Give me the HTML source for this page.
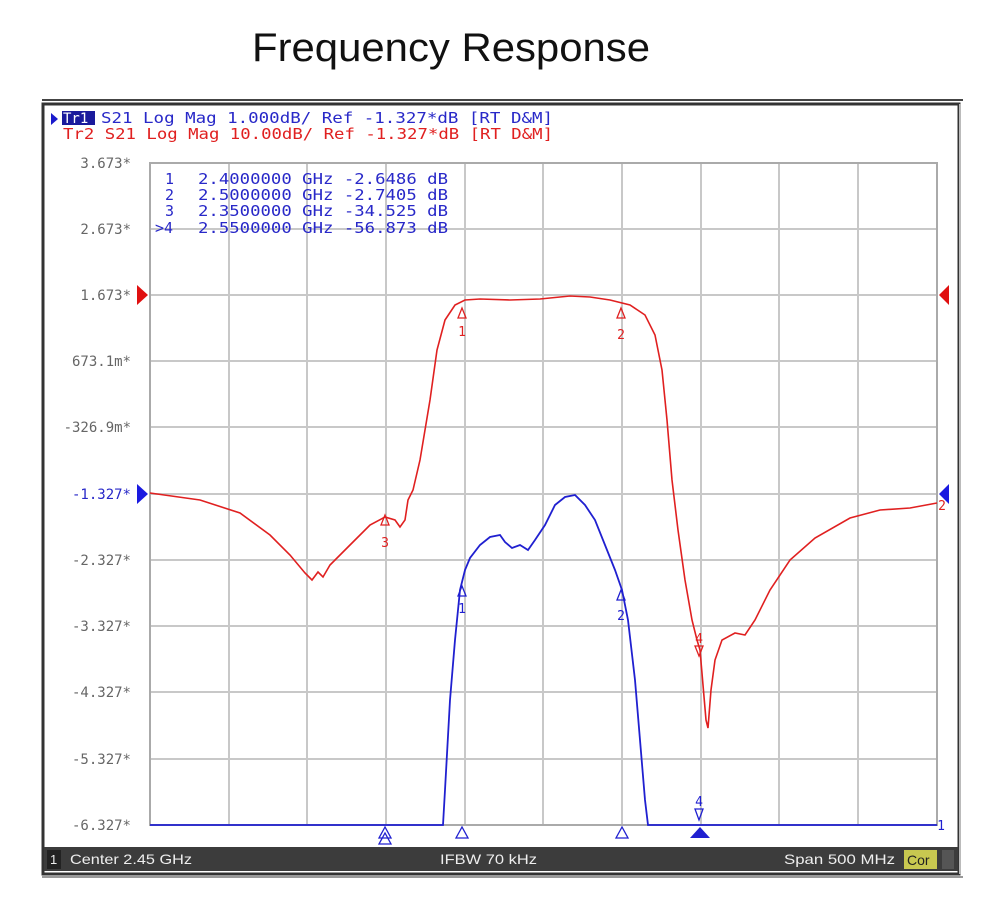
<!DOCTYPE html>
<html><head><meta charset="utf-8"><style>
body{margin:0;background:#fff;width:1000px;height:906px;overflow:hidden}
svg{display:block}
text{font-family:"DejaVu Sans Mono","Liberation Mono",monospace}
</style></head><body>
<svg width="1000" height="906" xmlns="http://www.w3.org/2000/svg">
<text x="252" y="61" textLength="398" lengthAdjust="spacingAndGlyphs" style="font-family:'Liberation Sans',sans-serif;font-size:40px" fill="#111">Frequency Response</text>
<!-- frame -->
<line x1="42" y1="100" x2="963" y2="100" stroke="#444" stroke-width="2"/>
<rect x="43" y="104" width="916" height="770" fill="#fff" stroke="#333" stroke-width="3"/>
<line x1="960" y1="104" x2="960" y2="874" stroke="#bbb" stroke-width="2"/>
<line x1="42" y1="877" x2="963" y2="877" stroke="#999" stroke-width="2"/>
<!-- status bar -->
<rect x="44" y="847" width="914" height="24" fill="#3c3c3c"/>
<rect x="47" y="850" width="14" height="19" fill="#222"/>
<text x="50" y="864" fill="#eee" style="font-family:'Liberation Sans',sans-serif;font-size:13px">1</text>
<text x="70" y="864" fill="#eee" textLength="122" lengthAdjust="spacingAndGlyphs" style="font-family:'Liberation Sans',sans-serif;font-size:14px">Center 2.45 GHz</text>
<text x="440" y="864" fill="#eee" textLength="97" lengthAdjust="spacingAndGlyphs" style="font-family:'Liberation Sans',sans-serif;font-size:14px">IFBW 70 kHz</text>
<text x="784" y="864" fill="#eee" textLength="111" lengthAdjust="spacingAndGlyphs" style="font-family:'Liberation Sans',sans-serif;font-size:14px">Span 500 MHz</text>
<rect x="904" y="850" width="33" height="19" fill="#c8c850"/>
<text x="907" y="865" fill="#222" style="font-family:'Liberation Sans',sans-serif;font-size:14px">Cor</text>
<rect x="942" y="850" width="12" height="19" fill="#555"/>
<!-- header -->
<path d="M51 113 L58 119 L51 125Z" fill="#1a1acc"/>
<rect x="62" y="111" width="33" height="14" fill="#1a1a9c"/>
<text x="63" y="123" font-size="14" fill="#fff">Tr1</text>
<text x="101" y="123" font-size="15" fill="#2828c8" textLength="452" lengthAdjust="spacingAndGlyphs" xml:space="preserve">S21 Log Mag 1.000dB/ Ref -1.327*dB [RT D&amp;M]</text>
<text x="63" y="139" font-size="15" fill="#e02020" textLength="490" lengthAdjust="spacingAndGlyphs" xml:space="preserve">Tr2 S21 Log Mag 10.00dB/ Ref -1.327*dB [RT D&amp;M]</text>
<!-- grid -->
<g stroke="#c8c8c8" stroke-width="2">
<line x1="229" y1="163" x2="229" y2="825"/><line x1="307" y1="163" x2="307" y2="825"/><line x1="386" y1="163" x2="386" y2="825"/><line x1="465" y1="163" x2="465" y2="825"/><line x1="543" y1="163" x2="543" y2="825"/><line x1="622" y1="163" x2="622" y2="825"/><line x1="701" y1="163" x2="701" y2="825"/><line x1="779" y1="163" x2="779" y2="825"/><line x1="858" y1="163" x2="858" y2="825"/>
<line x1="150" y1="229" x2="937" y2="229"/><line x1="150" y1="295" x2="937" y2="295"/><line x1="150" y1="361" x2="937" y2="361"/><line x1="150" y1="427" x2="937" y2="427"/><line x1="150" y1="494" x2="937" y2="494"/><line x1="150" y1="560" x2="937" y2="560"/><line x1="150" y1="626" x2="937" y2="626"/><line x1="150" y1="692" x2="937" y2="692"/><line x1="150" y1="759" x2="937" y2="759"/>
</g>
<rect x="150" y="163" width="787" height="662" fill="none" stroke="#aaa" stroke-width="2"/>
<!-- marker table -->
<g font-size="15" fill="#2828c8" xml:space="preserve">
<text x="165" y="184">1</text><text x="198" y="184" textLength="250" lengthAdjust="spacingAndGlyphs">2.4000000 GHz -2.6486 dB</text>
<text x="165" y="200">2</text><text x="198" y="200" textLength="250" lengthAdjust="spacingAndGlyphs">2.5000000 GHz -2.7405 dB</text>
<text x="165" y="216">3</text><text x="198" y="216" textLength="250" lengthAdjust="spacingAndGlyphs">2.3500000 GHz -34.525 dB</text>
<text x="155" y="233">&gt;4</text><text x="198" y="233" textLength="250" lengthAdjust="spacingAndGlyphs">2.5500000 GHz -56.873 dB</text>
</g>
<!-- y labels -->
<g font-size="14" fill="#666" text-anchor="end">
<text x="131" y="168">3.673*</text><text x="131" y="234">2.673*</text><text x="131" y="300">1.673*</text><text x="131" y="366">673.1m*</text><text x="131" y="432">-326.9m*</text><text x="131" y="499" fill="#2828c8">-1.327*</text><text x="131" y="565">-2.327*</text><text x="131" y="631">-3.327*</text><text x="131" y="697">-4.327*</text><text x="131" y="764">-5.327*</text><text x="131" y="830">-6.327*</text>
</g>
<path d="M137 285 L148 295 L137 305Z" fill="#e01010"/>
<path d="M137 484 L148 494 L137 504Z" fill="#1a1ae0"/>
<path d="M949 285 L939 295 L949 305Z" fill="#e01010"/>
<path d="M949 484 L939 494 L949 504Z" fill="#1a1ae0"/>
<!-- red trace -->
<polyline fill="none" stroke="#e02020" stroke-width="1.6" points="150,493 200,500 240,513 270,535 290,555 305,573 312,580 318,572 323,577 330,565 350,545 370,525 385,517 395,520 400,527 405,520 408,500 413,490 420,460 430,400 437,350 445,320 455,305 465,300 480,299 510,300 540,299 570,296 590,297 610,300 630,305 645,315 655,335 662,370 667,420 672,480 678,530 685,580 692,620 697,640 700,650 703,685 706,720 708,728 711,690 715,660 722,640 735,633 745,635 755,620 770,590 790,560 815,538 850,518 880,510 910,508 937,503"/>
<!-- blue trace -->
<polyline fill="none" stroke="#2020d0" stroke-width="1.8" points="150,825 443,825 445,790 450,700 455,640 460,590 465,570 470,558 480,545 490,537 500,535 505,542 512,548 520,545 528,550 535,540 545,525 555,505 565,497 575,495 585,505 595,520 605,545 615,570 622,590 628,620 635,680 640,740 645,800 648,825 937,825"/>
<!-- red markers -->
<g fill="none" stroke="#e02020" stroke-width="1.3">
<path d="M462 308 L458 318 L466 318Z"/><path d="M621 308 L617 318 L625 318Z"/><path d="M385 515 L381 525 L389 525Z"/><path d="M695 646 L703 646 L699 656Z"/>
</g>
<g font-size="13" fill="#e02020" text-anchor="middle">
<text x="462" y="336">1</text><text x="621" y="339">2</text><text x="385" y="547">3</text><text x="699" y="643">4</text><text x="942" y="510">2</text>
</g>
<!-- blue markers -->
<g fill="none" stroke="#2020d0" stroke-width="1.3">
<path d="M462 586 L458 596 L466 596Z"/><path d="M621 590 L617 600 L625 600Z"/>
<path d="M385 827 L379 838 L391 838Z"/><path d="M385 833 L379 844 L391 844Z"/><path d="M462 827 L456 838 L468 838Z"/><path d="M622 827 L616 838 L628 838Z"/><path d="M695 809 L703 809 L699 820Z"/>
</g>
<path d="M700 827 L690 838 L710 838Z" fill="#2020d0"/>
<g font-size="13" fill="#2020d0" text-anchor="middle">
<text x="462" y="613">1</text><text x="621" y="620">2</text><text x="699" y="806">4</text><text x="941" y="830">1</text>
</g>
</svg>
</body></html>
